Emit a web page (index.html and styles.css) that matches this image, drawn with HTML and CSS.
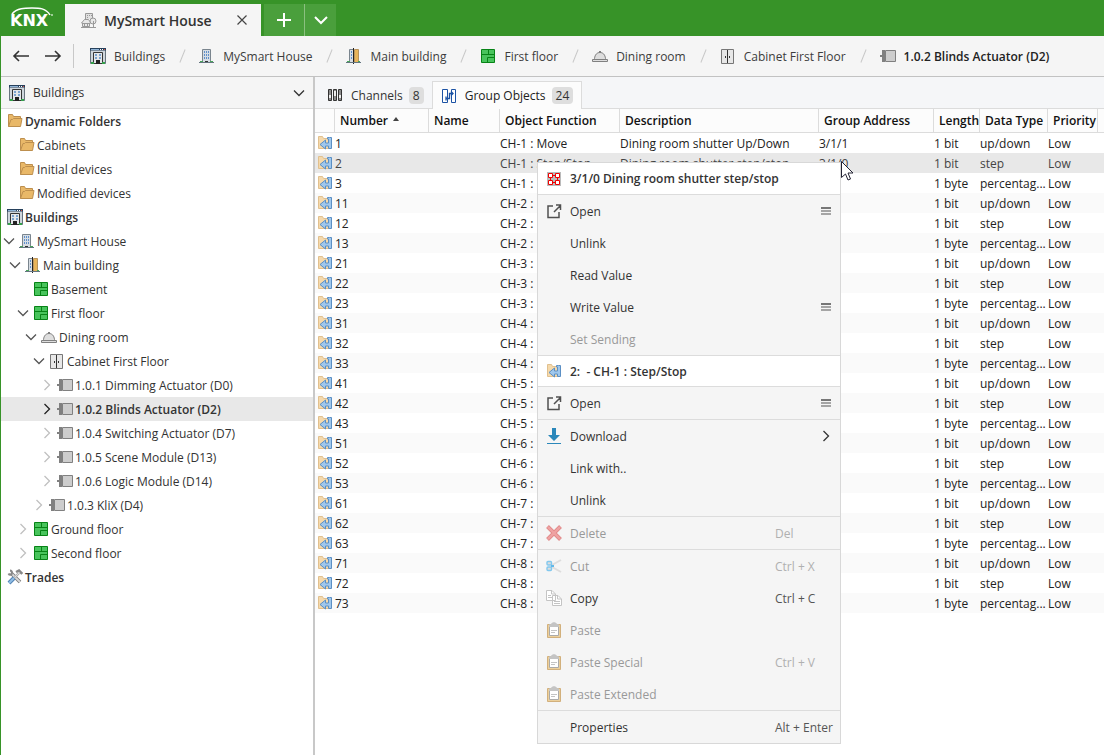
FILE: index.html
```html
<!DOCTYPE html>
<html lang="en">
<head>
<meta charset="utf-8">
<title>MySmart House</title>
<link rel="stylesheet" href="styles.css">
</head>
<body>
<svg class="sprite" aria-hidden="true">
  <symbol id="buildings" viewBox="0 0 16 16"><path fill="#cfd6dc" stroke="#68747e" d="M.5 1.500h15v14H.5z"/><path fill="#27415c" d="M0 0h16v2.500H0z"/><path fill="#8fb4d8" d="M1 1h8v1H1z"/><path fill="#fff" d="M10 1h1v1h-1zM12 1h1v1h-1z"/><path fill="#e0523f" d="M14 1h1v1h-1z"/><path fill="#e4e7ea" stroke="#353535" d="M3.500 4.500h9v11h-9z"/><path fill="#7ba3cf" d="M5 6h2v2H5zM9 6h2v2H9zM5 9h2v2H5zM9 9h2v2H9z"/><path fill="#222" d="M6 12h4v4H6z"/><path fill="#35a04b" d="M1 14h3v2H1zM12 14h3v2h-3z"/></symbol>
  <symbol id="building" viewBox="0 0 16 16"><path fill="#d7dde3" stroke="#7a858e" d="M3.500 1.500h8v13h-8z"/><path fill="#5f8fca" d="M5 3h1v2H5zM7 3h1v2H7zM9 3h1v2H9zM5 6h1v2H5zM7 6h1v2H7zM9 6h1v2H9zM5 9h1v2H5zM7 9h1v2H7zM9 9h1v2H9z"/><path fill="#333" d="M6 13h3v2H6z"/><path fill="#48a45a" d="M1 13h3v2H1zM11 13h3v2h-3z"/><path fill="#657580" d="M0 14h15v1H0z"/></symbol>
  <symbol id="part" viewBox="0 0 16 16"><path fill="#d7dde3" stroke="#7a858e" d="M3.500 1.500h4v13h-4z"/><path fill="#5f8fca" d="M5 3h1v2H5zM5 6h1v2H5zM5 9h1v2H5z"/><path fill="#e8b45a" stroke="#b8935c" d="M8.500 1.500h4v13h-4z"/><path fill="#222" d="M7 0h1v16H7z"/><path fill="#48a45a" d="M1 13h3v2H1zM12 13h2v2h-2z"/><path fill="#657580" d="M0 14h15v1H0z"/></symbol>
  <symbol id="floor" viewBox="0 0 16 16"><path fill="#48c45c" stroke="#078316" d="M1.500 1.500h13v13h-13z"/><path fill="none" stroke="#078316" d="M1 6.500h14M8.500 1v5M15 9.500H7.500V15"/></symbol>
  <symbol id="room" viewBox="0 0 16 16"><path fill="#dedede" stroke="#808080" d="M2.500 11.500v-1C3 6.500 5 4.500 8 4.500s5 2 5.500 6v1z"/><path fill="#dedede" stroke="#808080" d="M.5 11.500h15v2H.5z"/><path fill="#808080" d="M7 3h2v2H7z"/></symbol>
  <symbol id="cabinet" viewBox="0 0 16 16"><path fill="#e7e7e7" stroke="#777" d="M1.500 1.500h12v14h-12z"/><path fill="#333" d="M7 2h1v13H7zM5 8h1v2H5zM9 8h1v2H9z"/></symbol>
  <symbol id="device" viewBox="0 0 16 16"><path fill="#808080" d="M0 7h2V2h3v12H2V9H0z"/><path fill="#cdcdcd" stroke="#808080" d="M5.500 2.500h10v11h-10z"/></symbol>
  <symbol id="folder" viewBox="0 0 16 16"><path fill="#e9b868" stroke="#bd8f4e" d="M1.500 13.500v-12h4l1 2h7v2h1.500l-1.500 8z"/><path fill="none" stroke="#bd8f4e" d="M1.500 13.500L4 6.500h1.500l1-1H15"/></symbol>
  <symbol id="tools" viewBox="0 0 16 16"><path fill="none" stroke="#777" stroke-width="3.600" d="M4 4l9 9"/><path fill="none" stroke="#d8d8d8" stroke-width="1.800" d="M4 4l9 9"/><path fill="none" stroke="#888" stroke-width="2" d="M1.500 4.500c1 2 3.500 1.500 3.500-.5 0-1.500-1-2.500-2-2.500"/><path fill="none" stroke="#888" stroke-width="2.400" d="M8 8l4-4M9 3l3-1.500L14.500 4l-1 1"/><path fill="none" stroke="#ddd" stroke-width="1.200" d="M8 8l4-4"/><path stroke="#5384b5" stroke-width="4" d="M2 14l5-5"/><path stroke="#91bde4" stroke-width="2" d="M2 14l5-5"/></symbol>
  <symbol id="object" viewBox="0 0 16 16"><path fill="#f5d9ab" stroke="#e1c08e" d="M1.500 13.500v-12h4l1 2h5v10z"/><path fill="#9fc7ec" stroke="#5b8fc4" stroke-linejoin="round" d="M12.500 2.500h2v11h-3V11H8.500v3L3 9.500 8.500 5v3h3V4h-1V2.500z"/></symbol>
  <symbol id="channels" viewBox="0 0 16 16"><path fill="#8b8b8b" stroke="#333" d="M1.500 2.500h3v11h-3zM6.500 2.500h3v11h-3zM11.500 2.500h3v11h-3z"/><path fill="#eee" d="M2 8h2v3H2zM7 4h2v5H7zM12 8h2v3h-2z"/></symbol>
  <symbol id="groups" viewBox="0 0 16 16"><path fill="#fff" stroke="#1c53a4" d="M1.500 14.500v-13h5v13zM10.500 14.500v-13h4v13z"/><path fill="none" stroke="#1c53a4" stroke-width="1.300" d="M5 10.500h3.500v-5H12M10 3.500l2 2-2 2M5 8.500v4"/></symbol>
  <symbol id="city" viewBox="0 0 16 16"><path fill="#e0e0e0" stroke="#999" d="M4.500 7V1.500h7V7"/><path fill="#999" d="M6 3h1v1H6zM8 3h1v1H8zM10 3h1v1h-1zM6 5h1v1H6z"/><path fill="#e8e8e8" stroke="#999" d="M1.500 14.500V11h-1l3-3.500h4L10 11H8.500v3.500z"/><circle cx="12" cy="9" r="3" fill="#e8e8e8" stroke="#999"/><path stroke="#999" d="M12.500 9v6M0 15.500h15M1 11.500h8M3.500 15v-3M6.500 15v-3"/></symbol>
  <symbol id="down" viewBox="0 0 12 12"><path fill="none" stroke="currentColor" stroke-width="1.300" d="M1 3.500l5 5 5-5"/></symbol>
  <symbol id="right" viewBox="0 0 12 12"><path fill="none" stroke="currentColor" stroke-width="1.300" d="M3.500 1l5 5-5 5"/></symbol>
  <symbol id="open" viewBox="0 0 16 16"><path fill="none" stroke="#505050" stroke-width="1.500" d="M7 3H2v11.500h11V9M8 9l6-6M10 2h4.500v5"/></symbol>
  <symbol id="address" viewBox="0 0 16 16"><path fill="#bbb" d="M1 1h14v14H1z"/><path stroke="#f00000" d="M4.500 6v4M11.500 6v4M6 4.500h4M6 11.500h4"/><path fill="#fff" stroke="#f00000" d="M2.500 2.500h4v4h-4zM9.500 2.500h4v4h-4zM2.500 9.500h4v4h-4zM9.500 9.500h4v4h-4z"/></symbol>
  <symbol id="list" viewBox="0 0 12 12"><path fill="#777" d="M1 2h10v2H1z"/><path fill="#a5a5a5" d="M1 5h10v2H1zM1 8h10v2H1z"/></symbol>
  <symbol id="download" viewBox="0 0 16 16"><path fill="#2a87ba" d="M6 0h4v7h4l-6 6-6-6h4zM1 15h14v1H1z"/></symbol>
  <symbol id="delete" viewBox="0 0 16 16"><path stroke="#e08a8a" stroke-width="4" d="M1.500 1.500l13 13M14.500 1.500l-13 13"/><path stroke="#efa3a3" stroke-width="2.400" d="M2 2l12 12M14 2L2 14"/></symbol>
  <symbol id="cut" viewBox="0 0 16 16"><path stroke="#ddd" stroke-width="2" d="M6 7l9-5M6 9l9 5"/><rect x="1" y="3.500" width="4.500" height="3.500" rx="1" fill="#ddd" stroke="#82c8ee" stroke-width="1.400"/><rect x="1" y="9" width="4.500" height="3.500" rx="1" fill="#ddd" stroke="#82c8ee" stroke-width="1.400"/><path fill="#62b8e8" d="M5 7h3v2H5z"/></symbol>
  <symbol id="copy" viewBox="0 0 16 16"><path fill="#fff" stroke="#c4c4c4" d="M.5.500H6L9.500 4v6.500h-9zM6.500 5.500H12L15.500 9v6.500h-9z"/><path fill="none" stroke="#c4c4c4" d="M5.500.500V4H9M11.500 5.500V9H15M2 5.500h3M2 7.500h4M8 11.500h6M8 13.500h6"/></symbol>
  <symbol id="paste" viewBox="0 0 16 16"><path fill="#ecd09c" stroke="#d2b07c" d="M1.500 2.500h13v13h-13z"/><path fill="#fff" stroke="#aaa" d="M3.500 4.500h9v9h-9z"/><path fill="#c4c4c4" d="M3 5V2.500L5 2c1-2.500 5-2.500 6 0l2 .5V5z"/><path stroke="#c4c4c4" d="M5 8.500h6M5 10.500h4"/></symbol>
  <symbol id="back" viewBox="0 0 18 14"><path fill="none" stroke="currentColor" stroke-width="1.600" d="M17 7H2M7 2L2 7l5 5"/></symbol>
  <symbol id="forward" viewBox="0 0 18 14"><path fill="none" stroke="currentColor" stroke-width="1.600" d="M1 7h15M11 2l5 5-5 5"/></symbol>
</svg>

<div class="app">
  <header class="titlebar">
    <svg class="logo" viewBox="0 0 64 36" role="img" aria-label="KNX"><text x="9" y="26">KNX</text><path d="M11 14C16 8 24 8 31 8s14 0 18 7" fill="none" stroke="#fff" stroke-width="1.500"/><circle cx="51" cy="15" r="1" fill="#bfe0b8"/></svg>
    <div class="project-tab">
      <svg class="icon"><use href="#city"/></svg>
      <span class="project-name">MySmart House</span>
      <button class="close" aria-label="Close project"><svg viewBox="0 0 12 12" class="glyph"><path d="M1.500 1.500l9 9M10.500 1.500l-9 9" stroke="currentColor" stroke-width="1.200"/></svg></button>
    </div>
    <div class="tab-tools">
      <button class="tab-tool wide" aria-label="New tab"><svg viewBox="0 0 16 16" class="icon"><path d="M8 1v14M1 8h14" stroke="currentColor" stroke-width="2"/></svg></button>
      <button class="tab-tool" aria-label="List tabs"><svg viewBox="0 0 16 16" class="icon"><path d="M2 5l6 6 6-6" fill="none" stroke="currentColor" stroke-width="2"/></svg></button>
    </div>
  </header>

  <div class="toolbar">
    <div class="history">
      <button aria-label="Back"><svg class="arrow"><use href="#back"/></svg></button>
      <button aria-label="Forward"><svg class="arrow"><use href="#forward"/></svg></button>
    </div>
    <nav class="crumbs" aria-label="Location">
      <a href="#"><svg class="icon"><use href="#buildings"/></svg>Buildings</a>
      <a href="#"><svg class="icon"><use href="#building"/></svg>MySmart House</a>
      <a href="#"><svg class="icon"><use href="#part"/></svg>Main building</a>
      <a href="#"><svg class="icon"><use href="#floor"/></svg>First floor</a>
      <a href="#"><svg class="icon"><use href="#room"/></svg>Dining room</a>
      <a href="#"><svg class="icon"><use href="#cabinet"/></svg>Cabinet First Floor</a>
      <a href="#" class="current" aria-current="page"><svg class="icon"><use href="#device"/></svg>1.0.2 Blinds Actuator (D2)</a>
    </nav>
  </div>

  <div class="workspace">
    <aside class="sidebar">
      <div class="view-picker">
        <svg class="icon"><use href="#buildings"/></svg>
        <select aria-label="View"><option>Buildings</option></select>
        <svg class="glyph"><use href="#down"/></svg>
      </div>
      <ul class="tree">
        <li class="root"><svg class="icon"><use href="#folder"/></svg>Dynamic Folders</li>
        <li class="l1"><span class="twist"></span><svg class="icon"><use href="#folder"/></svg>Cabinets</li>
        <li class="l1"><span class="twist"></span><svg class="icon"><use href="#folder"/></svg>Initial devices</li>
        <li class="l1"><span class="twist"></span><svg class="icon"><use href="#folder"/></svg>Modified devices</li>
        <li class="root"><svg class="icon"><use href="#buildings"/></svg>Buildings</li>
        <li class="l1"><button class="twist" aria-label="Collapse"><svg class="glyph"><use href="#down"/></svg></button><svg class="icon"><use href="#building"/></svg>MySmart House</li>
        <li class="l2"><button class="twist" aria-label="Collapse"><svg class="glyph"><use href="#down"/></svg></button><svg class="icon"><use href="#part"/></svg>Main building</li>
        <li class="l3"><span class="twist"></span><svg class="icon"><use href="#floor"/></svg>Basement</li>
        <li class="l3"><button class="twist" aria-label="Collapse"><svg class="glyph"><use href="#down"/></svg></button><svg class="icon"><use href="#floor"/></svg>First floor</li>
        <li class="l4"><button class="twist" aria-label="Collapse"><svg class="glyph"><use href="#down"/></svg></button><svg class="icon"><use href="#room"/></svg>Dining room</li>
        <li class="l5"><button class="twist" aria-label="Collapse"><svg class="glyph"><use href="#down"/></svg></button><svg class="icon"><use href="#cabinet"/></svg>Cabinet First Floor</li>
        <li class="l6"><button class="twist closed" aria-label="Expand"><svg class="glyph"><use href="#right"/></svg></button><svg class="icon"><use href="#device"/></svg>1.0.1 Dimming Actuator (D0)</li>
        <li class="l6 selected"><button class="twist closed" aria-label="Expand"><svg class="glyph"><use href="#right"/></svg></button><svg class="icon"><use href="#device"/></svg>1.0.2 Blinds Actuator (D2)</li>
        <li class="l6"><button class="twist closed" aria-label="Expand"><svg class="glyph"><use href="#right"/></svg></button><svg class="icon"><use href="#device"/></svg>1.0.4 Switching Actuator (D7)</li>
        <li class="l6"><button class="twist closed" aria-label="Expand"><svg class="glyph"><use href="#right"/></svg></button><svg class="icon"><use href="#device"/></svg>1.0.5 Scene Module (D13)</li>
        <li class="l6"><button class="twist closed" aria-label="Expand"><svg class="glyph"><use href="#right"/></svg></button><svg class="icon"><use href="#device"/></svg>1.0.6 Logic Module (D14)</li>
        <li class="l5"><button class="twist closed" aria-label="Expand"><svg class="glyph"><use href="#right"/></svg></button><svg class="icon"><use href="#device"/></svg>1.0.3 KliX (D4)</li>
        <li class="l3"><button class="twist closed" aria-label="Expand"><svg class="glyph"><use href="#right"/></svg></button><svg class="icon"><use href="#floor"/></svg>Ground floor</li>
        <li class="l3"><button class="twist closed" aria-label="Expand"><svg class="glyph"><use href="#right"/></svg></button><svg class="icon"><use href="#floor"/></svg>Second floor</li>
        <li class="root"><svg class="icon"><use href="#tools"/></svg>Trades</li>
      </ul>
    </aside>

    <main class="content">
      <div class="tabs" role="tablist">
        <button class="tab" role="tab"><svg class="icon"><use href="#channels"/></svg>Channels<span class="count">8</span></button>
        <button class="tab active" role="tab" aria-selected="true"><svg class="icon"><use href="#groups"/></svg>Group Objects<span class="count">24</span></button>
      </div>
      <table class="grid">
        <colgroup><col class="c-icon"><col class="c-number"><col class="c-name"><col class="c-function"><col class="c-description"><col class="c-address"><col class="c-length"><col class="c-type"><col class="c-priority"><col></colgroup>
        <thead><tr><th></th><th>Number<svg class="sort" viewBox="0 0 6 4"><path fill="#444" d="M0 4l3-4 3 4z"/></svg></th><th>Name</th><th>Object Function</th><th>Description</th><th>Group Address</th><th>Length</th><th>Data Type</th><th>Priority</th><th></th></tr></thead>
        <tbody>
          <tr><td><svg class="icon"><use href="#object"/></svg></td><td>1</td><td></td><td>CH-1 : Move</td><td>Dining room shutter Up/Down</td><td>3/1/1</td><td>1 bit</td><td>up/down</td><td>Low</td><td></td></tr>
          <tr class="selected"><td><svg class="icon"><use href="#object"/></svg></td><td>2</td><td></td><td>CH-1 : Step/Stop</td><td>Dining room shutter step/stop</td><td>3/1/0</td><td>1 bit</td><td>step</td><td>Low</td><td></td></tr>
          <tr><td><svg class="icon"><use href="#object"/></svg></td><td>3</td><td></td><td>CH-1 :</td><td></td><td></td><td>1 byte</td><td>percentag...</td><td>Low</td><td></td></tr>
          <tr><td><svg class="icon"><use href="#object"/></svg></td><td>11</td><td></td><td>CH-2 :</td><td></td><td></td><td>1 bit</td><td>up/down</td><td>Low</td><td></td></tr>
          <tr><td><svg class="icon"><use href="#object"/></svg></td><td>12</td><td></td><td>CH-2 :</td><td></td><td></td><td>1 bit</td><td>step</td><td>Low</td><td></td></tr>
          <tr><td><svg class="icon"><use href="#object"/></svg></td><td>13</td><td></td><td>CH-2 :</td><td></td><td></td><td>1 byte</td><td>percentag...</td><td>Low</td><td></td></tr>
          <tr><td><svg class="icon"><use href="#object"/></svg></td><td>21</td><td></td><td>CH-3 :</td><td></td><td></td><td>1 bit</td><td>up/down</td><td>Low</td><td></td></tr>
          <tr><td><svg class="icon"><use href="#object"/></svg></td><td>22</td><td></td><td>CH-3 :</td><td></td><td></td><td>1 bit</td><td>step</td><td>Low</td><td></td></tr>
          <tr><td><svg class="icon"><use href="#object"/></svg></td><td>23</td><td></td><td>CH-3 :</td><td></td><td></td><td>1 byte</td><td>percentag...</td><td>Low</td><td></td></tr>
          <tr><td><svg class="icon"><use href="#object"/></svg></td><td>31</td><td></td><td>CH-4 :</td><td></td><td></td><td>1 bit</td><td>up/down</td><td>Low</td><td></td></tr>
          <tr><td><svg class="icon"><use href="#object"/></svg></td><td>32</td><td></td><td>CH-4 :</td><td></td><td></td><td>1 bit</td><td>step</td><td>Low</td><td></td></tr>
          <tr><td><svg class="icon"><use href="#object"/></svg></td><td>33</td><td></td><td>CH-4 :</td><td></td><td></td><td>1 byte</td><td>percentag...</td><td>Low</td><td></td></tr>
          <tr><td><svg class="icon"><use href="#object"/></svg></td><td>41</td><td></td><td>CH-5 :</td><td></td><td></td><td>1 bit</td><td>up/down</td><td>Low</td><td></td></tr>
          <tr><td><svg class="icon"><use href="#object"/></svg></td><td>42</td><td></td><td>CH-5 :</td><td></td><td></td><td>1 bit</td><td>step</td><td>Low</td><td></td></tr>
          <tr><td><svg class="icon"><use href="#object"/></svg></td><td>43</td><td></td><td>CH-5 :</td><td></td><td></td><td>1 byte</td><td>percentag...</td><td>Low</td><td></td></tr>
          <tr><td><svg class="icon"><use href="#object"/></svg></td><td>51</td><td></td><td>CH-6 :</td><td></td><td></td><td>1 bit</td><td>up/down</td><td>Low</td><td></td></tr>
          <tr><td><svg class="icon"><use href="#object"/></svg></td><td>52</td><td></td><td>CH-6 :</td><td></td><td></td><td>1 bit</td><td>step</td><td>Low</td><td></td></tr>
          <tr><td><svg class="icon"><use href="#object"/></svg></td><td>53</td><td></td><td>CH-6 :</td><td></td><td></td><td>1 byte</td><td>percentag...</td><td>Low</td><td></td></tr>
          <tr><td><svg class="icon"><use href="#object"/></svg></td><td>61</td><td></td><td>CH-7 :</td><td></td><td></td><td>1 bit</td><td>up/down</td><td>Low</td><td></td></tr>
          <tr><td><svg class="icon"><use href="#object"/></svg></td><td>62</td><td></td><td>CH-7 :</td><td></td><td></td><td>1 bit</td><td>step</td><td>Low</td><td></td></tr>
          <tr><td><svg class="icon"><use href="#object"/></svg></td><td>63</td><td></td><td>CH-7 :</td><td></td><td></td><td>1 byte</td><td>percentag...</td><td>Low</td><td></td></tr>
          <tr><td><svg class="icon"><use href="#object"/></svg></td><td>71</td><td></td><td>CH-8 :</td><td></td><td></td><td>1 bit</td><td>up/down</td><td>Low</td><td></td></tr>
          <tr><td><svg class="icon"><use href="#object"/></svg></td><td>72</td><td></td><td>CH-8 :</td><td></td><td></td><td>1 bit</td><td>step</td><td>Low</td><td></td></tr>
          <tr><td><svg class="icon"><use href="#object"/></svg></td><td>73</td><td></td><td>CH-8 :</td><td></td><td></td><td>1 byte</td><td>percentag...</td><td>Low</td><td></td></tr>
        </tbody>
      </table>
    </main>
  </div>
</div>

<div class="menu" role="menu">
  <div class="menu-title"><svg class="icon"><use href="#address"/></svg>3/1/0 Dining room shutter step/stop</div>
  <button role="menuitem"><svg class="icon"><use href="#open"/></svg><span>Open</span><svg class="glyph more"><use href="#list"/></svg></button>
  <button role="menuitem"><i class="icon"></i><span>Unlink</span></button>
  <button role="menuitem"><i class="icon"></i><span>Read Value</span></button>
  <button role="menuitem"><i class="icon"></i><span>Write Value</span><svg class="glyph more"><use href="#list"/></svg></button>
  <button role="menuitem" disabled><i class="icon"></i><span>Set Sending</span></button>
  <div class="menu-title ruled"><svg class="icon"><use href="#object"/></svg>2:&nbsp; - CH-1 : Step/Stop</div>
  <button role="menuitem"><svg class="icon"><use href="#open"/></svg><span>Open</span><svg class="glyph more"><use href="#list"/></svg></button>
  <hr>
  <button role="menuitem"><svg class="icon"><use href="#download"/></svg><span>Download</span><svg class="glyph more"><use href="#right"/></svg></button>
  <button role="menuitem"><i class="icon"></i><span>Link with..</span></button>
  <button role="menuitem"><i class="icon"></i><span>Unlink</span></button>
  <hr>
  <button role="menuitem" disabled><svg class="icon"><use href="#delete"/></svg><span>Delete</span><kbd>Del</kbd></button>
  <hr>
  <button role="menuitem" disabled><svg class="icon"><use href="#cut"/></svg><span>Cut</span><kbd>Ctrl + X</kbd></button>
  <button role="menuitem"><svg class="icon"><use href="#copy"/></svg><span>Copy</span><kbd>Ctrl + C</kbd></button>
  <button role="menuitem" disabled><svg class="icon"><use href="#paste"/></svg><span>Paste</span></button>
  <button role="menuitem" disabled><svg class="icon"><use href="#paste"/></svg><span>Paste Special</span><kbd>Ctrl + V</kbd></button>
  <button role="menuitem" disabled><svg class="icon"><use href="#paste"/></svg><span>Paste Extended</span></button>
  <hr>
  <button role="menuitem"><i class="icon"></i><span>Properties</span><kbd>Alt + Enter</kbd></button>
</div>
<svg class="pointer" viewBox="0 0 12 20" aria-hidden="true"><path fill="#fff" stroke="#223" d="M.5.500v16l4-3.500 2.500 6 2.500-1-2.500-6h5z"/></svg>
</body>
</html>
```
FILE: styles.css
```css
* { box-sizing: border-box; }
body {
  margin: 0;
  font: 12px/17px "Segoe UI", "Open Sans", "Noto Sans", sans-serif;
  color: #333;
  background: #fff;
}
button, select { font: inherit; color: inherit; background: none; border: 0; padding: 0; margin: 0; }
.sprite { display: none; }
.icon { width: 16px; height: 16px; flex: none; display: block; }
.glyph { width: 12px; height: 12px; flex: none; display: block; }

.app { min-height: 100vh; display: flex; flex-direction: column; border-left: 1px solid #379328; }

.titlebar { display: flex; height: 36px; background: #379328; }
.logo { width: 64px; height: 36px; }
.logo text { font: bold 16px "DejaVu Sans", sans-serif; fill: #fff; }
.project-tab { display: flex; align-items: center; width: 196px; margin-top: 4px; padding: 0 12px 0 16px; background: #f5f5f5; }
.project-name { flex: 1; padding-left: 7px; font-size: 14px; font-weight: 600; }
.close { padding: 1px; color: #444; }
.tab-tools { display: flex; gap: 1px; margin: 4px 0 0 3px; background: #8bc080; }
.tab-tool { display: grid; place-items: center; width: 31px; background: #4a9f3c; color: #fff; }
.tab-tool.wide { width: 40px; }

.toolbar { display: flex; align-items: center; height: 41px; background: #f5f5f5; border-bottom: 1px solid #c2c2c2; }
.history { display: flex; align-items: center; gap: 14px; width: 73px; height: 24px; padding-left: 11px; border-right: 1px solid #c8c8c8; }
.arrow { width: 18px; height: 14px; display: block; }
.crumbs { display: flex; padding-left: 16px; white-space: nowrap; }
.crumbs a { display: flex; align-items: center; gap: 8px; color: #3c3c3c; text-decoration: none; }
.crumbs a + a::before { content: ""; width: 1px; height: 14px; margin: 0 8px 0 17px; background: #c8c8c8; transform: rotate(22deg); }
.crumbs .current { font-weight: 600; color: #222; }

.workspace { display: flex; flex: 1; }
.sidebar { width: 314px; flex: none; border-right: 2px solid #c8c8c8; }
.view-picker { position: relative; display: flex; align-items: center; gap: 8px; height: 32px; padding: 0 8px; background: #f5f5f5; border-bottom: 1px solid #dcdcdc; }
.view-picker select { flex: 1; appearance: none; height: 31px; }
.view-picker .glyph { position: absolute; right: 8px; pointer-events: none; }

.tree { margin: 0; padding: 0; list-style: none; }
.tree li { display: flex; align-items: center; height: 24px; white-space: nowrap; }
.tree .icon { margin-right: 2px; }
.twist { width: 16px; flex: none; color: #555; }
.twist.closed { color: #c0c0c0; }
.tree .selected .twist { color: #222; }
.tree .root { padding-left: 6px; font-weight: 600; }
.l1 { padding-left: 2px; }
.l2 { padding-left: 8px; }
.l3 { padding-left: 16px; }
.l4 { padding-left: 24px; }
.l5 { padding-left: 32px; }
.l6 { padding-left: 40px; }
.tree .selected { font-weight: 600; background: #e8e8e8; }

.content { flex: 1; min-width: 0; }
.tabs { display: flex; align-items: flex-end; height: 32px; background: #f5f6f8; border-bottom: 1px solid #dcdcdc; }
.tab { display: flex; align-items: center; gap: 6px; height: 26px; padding: 0 8px 0 12px; }
.tab .icon { margin-right: 2px; }
.tab.active { height: 28px; margin-bottom: -1px; padding: 0 8px; background: #fcfcfc; border: 1px solid #dcdcdc; border-bottom: 0; color: #222; }
.count { padding: 0 4px; border-radius: 4px; background: #dedede; color: #333; }

.grid { width: 100%; table-layout: fixed; border-collapse: separate; border-spacing: 0; color: #222; }
.c-icon { width: 20px; }
.c-number { width: 94px; }
.c-name { width: 71px; }
.c-function { width: 120px; }
.c-description { width: 199px; }
.c-address { width: 115px; }
.c-length { width: 46px; }
.c-type { width: 68px; }
.c-priority { width: 50px; }
.grid th { height: 24px; padding: 0 0 0 5px; text-align: left; font-weight: 600; color: #111; background: #fcfcfc; border-right: 1px solid #dcdcdc; border-bottom: 1px solid #dcdcdc; white-space: nowrap; }
.grid th:last-child { border-right: 0; }
.grid td { height: 20px; padding: 0; white-space: nowrap; }
.grid td:first-child { padding-left: 2px; }
.grid tr:nth-child(even) td { background: #fafafa; }
.grid tr.selected td { background: #e8e8e8; color: #444; }
.sort { width: 6px; height: 4px; margin-left: 5px; vertical-align: 4px; }

.menu { position: absolute; left: 537px; top: 162px; width: 304px; background: #f5f5f5; border: 1px solid #d8d8d8; }
.menu-title, .menu button { display: flex; align-items: center; gap: 8px; width: 100%; height: 32px; padding: 0 8px; text-align: left; }
.menu-title { background: #fff; border-bottom: 1px solid #dcdcdc; font-weight: 600; }
.menu-title.ruled { border-top: 1px solid #dcdcdc; }
.menu hr { height: 1px; margin: 0; border: 0; background: #dcdcdc; }
.menu button span { flex: 1; }
.menu kbd { width: 57px; font: inherit; white-space: nowrap; color: #555; }
.menu button:disabled { color: #999; }
.menu button:disabled kbd { color: #b0b0b0; }
.pointer { position: absolute; left: 841px; top: 161px; width: 12px; height: 20px; }
```
